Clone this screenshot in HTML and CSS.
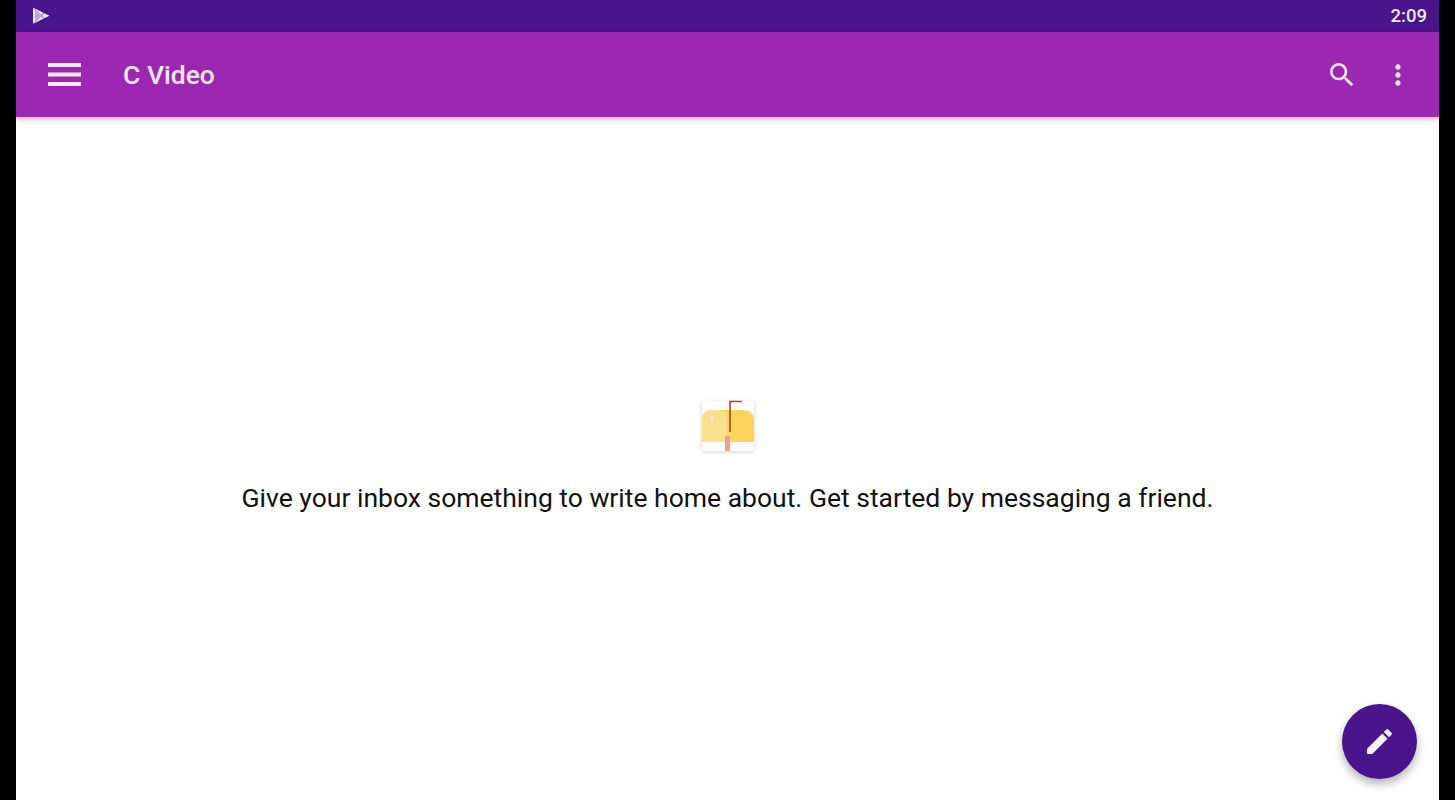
FILE: index.html
```html
<!DOCTYPE html>
<html lang="en">
<head>
    <meta charset="UTF-8">
    <meta name="viewport" content="width=device-width, initial-scale=1.0">
    <title>C Video</title>
    <link rel="stylesheet" href="styles.css">
</head>
<body>
    <div class="screen">
        <div class="status-bar">
            <svg class="play-icon" width="18" height="18" viewBox="0 0 18 18">
                <path d="M1 .5 L12.2 6.2 L17.5 8.7 L12.2 11.3 L1 17 Z" fill="#f1e8f6"/>
                <path d="M3 3.2 L8.4 8.7 L3 14.2 Z" fill="#7a52a8" opacity="0.45"/>
                <path d="M1 .5 L9.6 8.7 L1 17" fill="none" stroke="#4a148c" stroke-width="0.7" opacity="0.7"/>
                <path d="M11.8 5.8 L9.6 8.7 L11.8 11.6" fill="none" stroke="#4a148c" stroke-width="0.9" opacity="0.8"/>
            </svg>
            <span class="clock">2:09</span>
        </div>

        <div class="toolbar">
            <svg class="menu-icon" width="33" height="23" viewBox="0 0 33 23">
                <path d="M0 0h33v4H0zM0 9.5h33v4H0zM0 19h33v4H0z" fill="#f6e9f8"/>
            </svg>
            <span class="toolbar-title">C Video</span>
            <svg class="search-icon" width="32" height="32" viewBox="0 0 24 24">
                <path d="M15.5 14h-.79l-.28-.27A6.47 6.47 0 0 0 16 9.5 6.5 6.5 0 1 0 9.5 16c1.61 0 3.09-.59 4.23-1.57l.27.28v.79l5 4.99L20.49 19l-4.99-5zm-6 0C7.01 14 5 11.99 5 9.5S7.01 5 9.5 5 14 7.01 14 9.5 11.99 14 9.5 14z" fill="#f6e9f8"/>
            </svg>
            <svg class="more-icon" width="32" height="32" viewBox="0 0 24 24">
                <path d="M12 8c1.1 0 2-.9 2-2s-.9-2-2-2-2 .9-2 2 .9 2 2 2zm0 2c-1.1 0-2 .9-2 2s.9 2 2 2 2-.9 2-2-.9-2-2-2zm0 6c-1.1 0-2 .9-2 2s.9 2 2 2 2-.9 2-2-.9-2-2-2z" fill="#f6e9f8"/>
            </svg>
        </div>

        <div class="content">
            <svg class="mailbox" width="54" height="54" viewBox="0 0 54 54">
                <rect x="1" y="2" width="52" height="50" rx="3" fill="#ffffff"/>
                <path d="M1 43 V21 Q1 11 11 11 H42 Q53 11 53 21 V43 Z" fill="#fdd35f"/>
                <path d="M1 43 V21 Q1 11 11 11 H15 Q26 11 26 21 V43 Z" fill="#fde08f"/>
                <circle cx="11" cy="19" r="2" fill="#fff3d0"/>
                <rect x="24" y="37" width="5" height="15" fill="#efa191"/>
                <path d="M29 33 V2.5 H41" fill="none" stroke="#b5402a" stroke-width="1.6"/>
            </svg>
            <p class="empty-text">Give your inbox something to write home about. Get started by messaging a friend.</p>
        </div>

        <button class="fab">
            <svg width="33" height="33" viewBox="0 0 24 24">
                <path d="M3 17.25V21h3.75L17.81 9.94l-3.75-3.75L3 17.25zM20.71 7.04a1 1 0 0 0 0-1.41l-2.34-2.34a1 1 0 0 0-1.41 0l-1.83 1.83 3.75 3.75 1.83-1.83z" fill="#f8f3fb"/>
            </svg>
        </button>
    </div>
</body>
</html>
```

FILE: styles.css
```css
html, body {
    height: 100%;
}

body {
    margin: 0;
    background: #000;
    font-family: Roboto, "Liberation Sans", sans-serif;
    overflow: hidden;
}

.screen {
    position: relative;
    display: flex;
    flex-direction: column;
    height: 800px;
    margin: 0 16px;
    background: #fff;
}

.status-bar {
    display: flex;
    align-items: center;
    justify-content: space-between;
    flex: none;
    height: 32px;
    padding: 0 12px 0 16px;
    box-sizing: border-box;
    background: #4a148c;
}

.clock {
    color: #f1e8f6;
    font-size: 18.5px;
    font-weight: 500;
}

.toolbar {
    display: flex;
    align-items: center;
    flex: none;
    height: 85px;
    padding: 0 25px 0 32px;
    box-sizing: border-box;
    background: #9c27b0;
    box-shadow: 0 2px 5px rgba(0, 0, 0, 0.28);
    z-index: 1;
}

.toolbar-title {
    flex: 1;
    margin-left: 42px;
    color: #f6e9f8;
    font-size: 26.5px;
    font-weight: 500;
}

.more-icon {
    margin-left: 24px;
}

.content {
    display: flex;
    flex: 1;
    flex-direction: column;
    align-items: center;
    justify-content: center;
    padding-bottom: 3px;
}

.mailbox {
    display: block;
    filter: drop-shadow(0 1px 2px rgba(0, 0, 0, 0.18));
}

.empty-text {
    margin: 27px 0 0;
    color: #111;
    font-size: 26.5px;
    line-height: 36px;
}

.fab {
    position: absolute;
    right: 22px;
    bottom: 21px;
    display: flex;
    align-items: center;
    justify-content: center;
    width: 75px;
    height: 75px;
    padding: 0;
    border: none;
    border-radius: 50%;
    background: #4a148c;
    box-shadow: 0 5px 10px rgba(0, 0, 0, 0.3);
}
```
